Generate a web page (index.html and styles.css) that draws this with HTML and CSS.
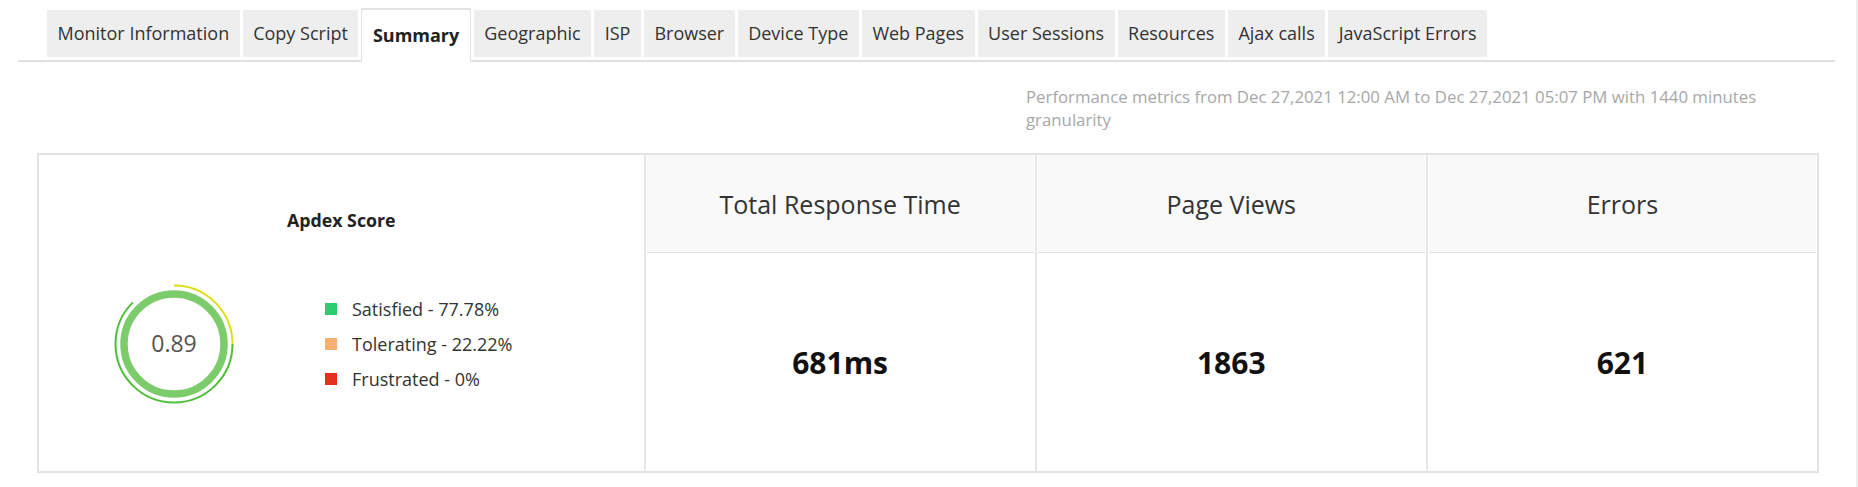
FILE: index.html
```html
<!DOCTYPE html>
<html lang="en">
<head>
    <meta charset="UTF-8">
    <title>Summary</title>
    <link rel="stylesheet" href="styles.css">
</head>
<body>

<ul class="tabs">
    <li class="tab">Monitor Information</li>
    <li class="tab">Copy Script</li>
    <li class="tab active">Summary</li>
    <li class="tab">Geographic</li>
    <li class="tab">ISP</li>
    <li class="tab">Browser</li>
    <li class="tab">Device Type</li>
    <li class="tab">Web Pages</li>
    <li class="tab">User Sessions</li>
    <li class="tab">Resources</li>
    <li class="tab">Ajax calls</li>
    <li class="tab">JavaScript Errors</li>
</ul>

<div class="content">
    <p class="range">Performance metrics from Dec 27,2021 12:00 AM to Dec 27,2021 05:07 PM with 1440 minutes granularity</p>

    <div class="summary">
        <div class="apdex">
            <h4>Apdex Score</h4>
            <div class="apdex-body">
                <svg class="donut" width="124" height="124" viewBox="0 0 124 124">
                    <!-- outer thin ring: tolerating (yellow) + satisfied (green) -->
                    <circle cx="62" cy="62" r="58.5" fill="none" stroke="#dede14" stroke-width="2"
                            stroke-dasharray="91.9 400" transform="rotate(-90 62 62)"/>
                    <circle cx="62" cy="62" r="58.5" fill="none" stroke="#4fbf37" stroke-width="2"
                            stroke-dasharray="229.7 400"/>
                    <circle cx="62" cy="62" r="50" fill="none" stroke="#7dcc6b" stroke-width="7.5"/>
                    <text x="62" y="70" text-anchor="middle" class="score">0.89</text>
                </svg>
                <ul class="legend">
                    <li><span class="sq satisfied"></span>Satisfied - 77.78%</li>
                    <li><span class="sq tolerating"></span>Tolerating - 22.22%</li>
                    <li><span class="sq frustrated"></span>Frustrated - 0%</li>
                </ul>
            </div>
        </div>
        <div class="metric">
            <div class="metric-head">Total Response Time</div>
            <div class="metric-value">681ms</div>
        </div>
        <div class="metric">
            <div class="metric-head">Page Views</div>
            <div class="metric-value">1863</div>
        </div>
        <div class="metric">
            <div class="metric-head">Errors</div>
            <div class="metric-value">621</div>
        </div>
    </div>
</div>

</body>
</html>
```

FILE: styles.css
```css
html, body {
    height: 100%;
}
body {
    margin: 0;
    font-family: "Open Sans", "Liberation Sans", sans-serif;
    color: #333;
    background: #fff;
    border-right: 2px solid #ededed;
    box-sizing: border-box;
}
.tabs {
    display: flex;
    align-items: flex-end;
    gap: 3px;
    list-style: none;
    margin: 8px 21px 0 18px;
    padding: 0 0 0 29px;
    border-bottom: 2px solid #e0e0e0;
}
.tab {
    background: #eeeeee;
    font-size: 18px;
    line-height: 47px;
    padding: 0 10.5px;
    margin-bottom: 3px;
    white-space: nowrap;
}
.tab.active {
    background: #fff;
    font-weight: bold;
    color: #222;
    border: 1px solid #e2e2e2;
    border-top: 2px solid #e2e2e2;
    border-bottom: none;
    line-height: 50px;
    padding-bottom: 2px;
    margin-bottom: -2px;
}
.content {
    padding: 0 37px;
}
.range {
    margin: 23px 0 22px 55.5%;
    font-size: 16.8px;
    line-height: 23px;
    color: #a8a8a8;
}
.summary {
    display: grid;
    grid-template-columns: 34fr 22fr 22fr 22fr;
    border: 2px solid #e3e3e3;
    height: 320px;
    box-sizing: border-box;
}
.apdex {
    padding-top: 53px;
}
.apdex h4 {
    margin: 0;
    text-align: center;
    font-size: 17.8px;
    line-height: 24px;
    color: #222;
}
.apdex-body {
    display: flex;
    align-items: center;
    gap: 89px;
    padding: 50px 0 0 73px;
}
.score {
    font-size: 23px;
    fill: #555;
    font-family: "Open Sans", sans-serif;
}
.legend {
    list-style: none;
    margin: 0;
    padding: 0;
    font-size: 18px;
}
.legend li {
    display: flex;
    align-items: center;
    line-height: 24px;
    margin: 11px 0;
}
.sq {
    width: 12px;
    height: 12px;
    margin-right: 15px;
}
.satisfied { background: #2ecc71; }
.tolerating { background: #f7b06f; }
.frustrated { background: #e3311e; }
.metric {
    display: flex;
    flex-direction: column;
    border-left: 2px solid #e6e6e6;
    padding: 0 1px;
}
.metric-head {
    height: 97px;
    background: #f9f9f9;
    border-bottom: 1px solid #e2e2e2;
    display: flex;
    align-items: center;
    justify-content: center;
    font-size: 25px;
    color: #333;
}
.metric-value {
    flex: 1;
    display: flex;
    align-items: center;
    justify-content: center;
    font-size: 30px;
    font-weight: bold;
    color: #111;
}
```
